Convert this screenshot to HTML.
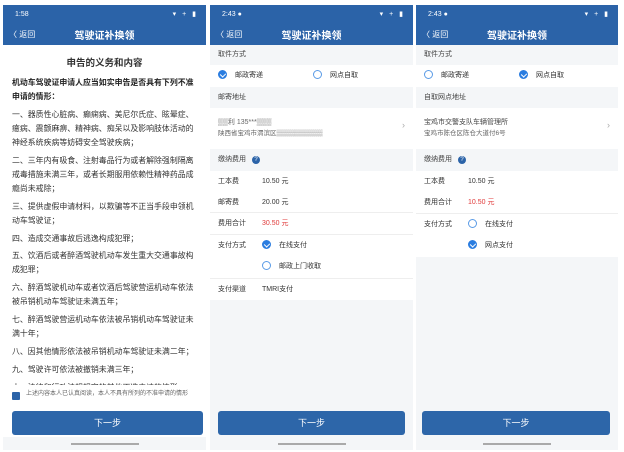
<!DOCTYPE html>
<html><head><meta charset="utf-8"><style>
*{margin:0;padding:0;box-sizing:border-box}
body{width:624px;height:452px;background:#fff;font-family:"Liberation Sans","Noto Sans CJK SC",sans-serif;position:relative;overflow:hidden;color:#333}
.ph{position:absolute;top:5px;height:445px;overflow:hidden;background:#f4f6f8}
.hd{position:absolute;left:0;right:0;top:0;height:40px;background:#2b63a8;color:#fff}
.tm{position:absolute;left:12px;top:6px;font-size:7px}
.ic{position:absolute;right:8px;top:5px;font-size:7px;letter-spacing:2px}
.bk{position:absolute;left:6px;top:24px;font-size:8px}
.tt{position:absolute;left:0;right:0;top:22px;text-align:center;font-size:10px;font-weight:bold}
.btn{position:absolute;left:8px;right:8px;top:406px;height:24px;background:#2d66a9;border-radius:3px;color:#fff;font-size:9px;text-align:center;line-height:24px}
.bar{position:absolute;left:50%;margin-left:-34px;width:68px;height:2px;background:#aaa;top:438px}
.r{position:absolute;left:0;right:0;font-size:7px;padding-left:8px}
.g{background:#f4f6f8;color:#444}
.w{background:#fff}
.rad{display:inline-block;width:9px;height:9px;border-radius:50%;border:1px solid #5a9be6;vertical-align:middle;margin-right:8px;position:relative;top:-1px}
.on{background:#2b7de0;border-color:#2b7de0}
.on:after{content:"";position:absolute;left:2px;top:1px;width:3px;height:4px;border:solid #fff;border-width:0 1px 1px 0;transform:rotate(45deg)}
.lb{display:inline-block;width:44px}
.q{display:inline-block;width:8px;height:8px;border-radius:50%;background:#2b63a8;color:#fff;font-size:6px;text-align:center;line-height:8px;margin-left:6px}
.red{color:#e03a3a}
.p{font-size:7.9px;line-height:14px;margin-bottom:3.9px;color:#333}
</style></head><body>

<div class="ph" style="left:3px;width:203px;background:#fff">
<div class="hd"><div class="tm">1:58</div><div class="ic">▾ + ▮</div><div class="bk">〈 返回</div><div class="tt">驾驶证补换领</div></div>
<div style="position:absolute;top:50px;left:0;right:0;text-align:center;font-size:9.5px;font-weight:bold">申告的义务和内容</div>
<div style="position:absolute;top:71px;left:9px;right:5px;height:309px;overflow:hidden">
<div class="p" style="font-weight:bold;color:#222">机动车驾驶证申请人应当如实申告是否具有下列不准申请的情形：</div>
<div class="p">一、器质性心脏病、癫痫病、美尼尔氏症、眩晕症、癔病、震颤麻痹、精神病、痴呆以及影响肢体活动的神经系统疾病等妨碍安全驾驶疾病；</div>
<div class="p">二、三年内有吸食、注射毒品行为或者解除强制隔离戒毒措施未满三年，或者长期服用依赖性精神药品成瘾尚未戒除；</div>
<div class="p">三、提供虚假申请材料，以欺骗等不正当手段申领机动车驾驶证；</div>
<div class="p">四、造成交通事故后逃逸构成犯罪；</div>
<div class="p">五、饮酒后或者醉酒驾驶机动车发生重大交通事故构成犯罪；</div>
<div class="p">六、醉酒驾驶机动车或者饮酒后驾驶营运机动车依法被吊销机动车驾驶证未满五年；</div>
<div class="p">七、醉酒驾驶营运机动车依法被吊销机动车驾驶证未满十年；</div>
<div class="p">八、因其他情形依法被吊销机动车驾驶证未满二年；</div>
<div class="p">九、驾驶许可依法被撤销未满三年；</div>
<div class="p">十、法律和行政法规规定的其他不准申请的情形</div>
</div>
<div style="position:absolute;top:387px;left:9px;width:8px;height:8px;background:#2b63a8;border-radius:1px"></div>
<div style="position:absolute;top:385px;left:23px;right:10px;font-size:6px;line-height:8px;color:#666">上述内容本人已认真阅读，本人不具有所列的不准申请的情形</div>
<div class="btn" style="left:9px;right:3px">下一步</div>
<div style="position:absolute;top:432px;left:0;right:0;height:13px;background:#f4f6f8"></div>
<div class="bar"></div>
</div>

<div class="ph" style="left:210px;width:203px">
<div class="hd"><div class="tm">2:43 ●</div><div class="ic">▾ + ▮</div><div class="bk">〈 返回</div><div class="tt">驾驶证补换领</div></div>
<div class="r g" style="top:40px;height:20px;line-height:20px">取件方式</div>
<div class="r w" style="top:60px;height:22px;line-height:22px"><span class="rad on"></span>邮政寄递<span style="display:inline-block;width:50px"></span><span class="rad"></span>网点自取</div>
<div class="r g" style="top:82px;height:21px;line-height:21px">邮寄地址</div>
<div class="r w" style="top:103px;height:41px;padding-top:9px;line-height:11px;color:#666;font-size:7px">▒▒利 135***▒▒▒<br><span style="font-size:6.5px">陕西省宝鸡市渭滨区▒▒▒▒▒▒▒▒▒▒</span><span style="position:absolute;right:8px;top:12px;color:#aaa;font-size:9px">›</span></div>
<div class="r g" style="top:144px;height:22px;line-height:22px">缴纳费用<span class="q">?</span></div>
<div class="r w" style="top:166px;height:21px;line-height:21px"><span class="lb">工本费</span>10.50 元</div>
<div class="r w" style="top:187px;height:21px;line-height:21px;border-bottom:1px solid #eee"><span class="lb">邮寄费</span>20.00 元</div>
<div class="r w" style="top:208px;height:22px;line-height:22px;border-bottom:1px solid #eee"><span class="lb">费用合计</span><span class="red">30.50 元</span></div>
<div class="r w" style="top:230px;height:44px;line-height:21px;border-bottom:1px solid #eee"><span class="lb">支付方式</span><span class="rad on"></span>在线支付<br><span class="lb"></span><span class="rad"></span>邮政上门收取</div>
<div class="r w" style="top:274px;height:21px;line-height:21px"><span class="lb">支付渠道</span>TMRI支付</div>
<div class="btn">下一步</div>
<div class="bar"></div>
</div>

<div class="ph" style="left:416px;width:202px">
<div class="hd"><div class="tm">2:43 ●</div><div class="ic">▾ + ▮</div><div class="bk">〈 返回</div><div class="tt">驾驶证补换领</div></div>
<div class="r g" style="top:40px;height:20px;line-height:20px">取件方式</div>
<div class="r w" style="top:60px;height:22px;line-height:22px"><span class="rad"></span>邮政寄递<span style="display:inline-block;width:50px"></span><span class="rad on"></span>网点自取</div>
<div class="r g" style="top:82px;height:21px;line-height:21px">自取网点地址</div>
<div class="r w" style="top:103px;height:41px;padding-top:9px;line-height:11px;color:#444">宝鸡市交警支队车辆管理所<br><span style="font-size:6.5px;color:#666">宝鸡市陈仓区陈仓大道付6号</span><span style="position:absolute;right:8px;top:12px;color:#aaa;font-size:9px">›</span></div>
<div class="r g" style="top:144px;height:22px;line-height:22px">缴纳费用<span class="q">?</span></div>
<div class="r w" style="top:166px;height:21px;line-height:21px"><span class="lb">工本费</span>10.50 元</div>
<div class="r w" style="top:187px;height:22px;line-height:22px;border-bottom:1px solid #eee"><span class="lb">费用合计</span><span class="red">10.50 元</span></div>
<div class="r w" style="top:209px;height:43px;line-height:21px"><span class="lb">支付方式</span><span class="rad"></span>在线支付<br><span class="lb"></span><span class="rad on"></span>网点支付</div>
<div class="btn" style="left:6px;right:8px">下一步</div>
<div class="bar"></div>
</div>
</body></html>
